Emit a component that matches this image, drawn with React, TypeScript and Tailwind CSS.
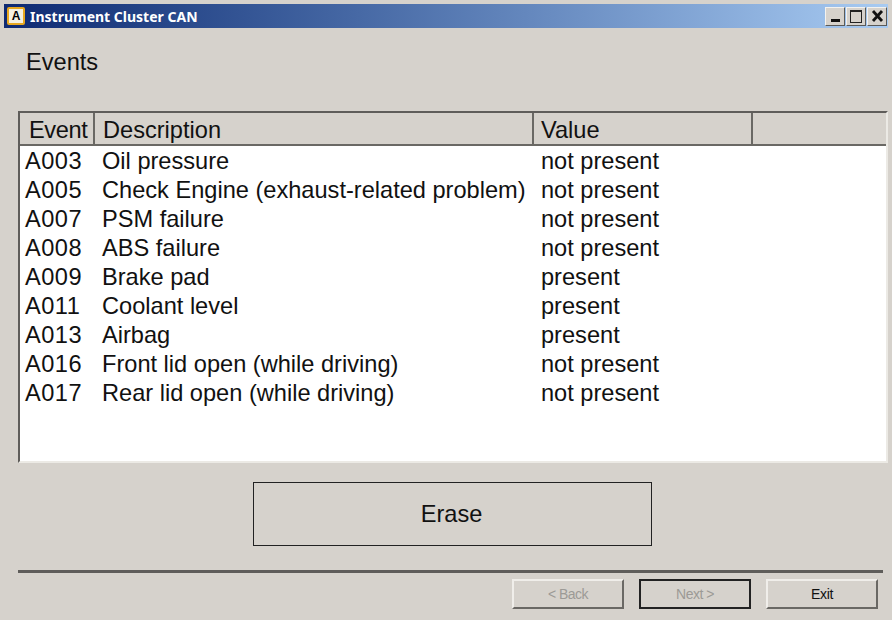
import * as React from 'react';

const ROWS = [
  ['A003', 'Oil pressure', 'not present'],
  ['A005', 'Check Engine (exhaust-related problem)', 'not present'],
  ['A007', 'PSM failure', 'not present'],
  ['A008', 'ABS failure', 'not present'],
  ['A009', 'Brake pad', 'present'],
  ['A011', 'Coolant level', 'present'],
  ['A013', 'Airbag', 'present'],
  ['A016', 'Front lid open (while driving)', 'not present'],
  ['A017', 'Rear lid open (while driving)', 'not present'],
];

const WinButton = ({ children }: { children: React.ReactNode }): React.JSX.Element => (
  <div className="flex h-[19px] w-[20px] items-center justify-center border border-t-[#f4f2ee] border-l-[#f4f2ee] border-r-[#5a5a58] border-b-[#5a5a58] bg-[#d6d2cc]">
    {children}
  </div>
);

const HeaderCell = ({ label, className }: { label: string; className: string }): React.JSX.Element => (
  <div className={`flex h-full items-center border-r-2 border-[#6a6864] pt-[4px] text-[23.6px] text-[#111] ${className}`}>{label}</div>
);

export default function App(): React.JSX.Element {
  return (
    <div className="flex h-[620px] w-[892px] flex-col bg-[#d6d2cc] pt-[4px] pl-[4px] font-['Liberation_Sans',sans-serif]">
      <div className="flex h-[24px] w-[884px] items-center bg-gradient-to-r from-[#0f2a72] to-[#a8cbf2] pr-[1px] pl-[3px]">
        <div className="flex h-[18px] w-[18px] items-center justify-center rounded-[2px] border-2 border-[#e8a820] bg-[#f6f1e2] text-[12px] leading-none font-bold text-black">
          A
        </div>
        <span className="ml-[5px] font-['Noto_Sans',sans-serif] text-[14px] font-bold text-white">Instrument Cluster CAN</span>
        <div className="ml-auto flex gap-px">
          <WinButton>
            <div className="mt-[9px] h-[3px] w-[9px] bg-[#111]" />
          </WinButton>
          <WinButton>
            <div className="h-[13px] w-[12px] border border-t-2 border-[#222]" />
          </WinButton>
          <WinButton>
            <svg width="13" height="12" viewBox="0 0 13 12">
              <path d="M2 1 L11 11 M11 1 L2 11" stroke="#111" strokeWidth="2.8" />
            </svg>
          </WinButton>
        </div>
      </div>

      <div className="ml-[22px] mt-[21px] text-[23.6px] leading-[26px] text-[#111]">Events</div>

      <div className="mt-[36px] ml-[14px] flex h-[352px] w-[870px] flex-col border-2 border-t-2 border-t-[#5f5d5a] border-l-[#5f5d5a] border-r-[#eceae5] border-b-[#eceae5] bg-white">
        <div className="flex h-[33px] shrink-0 items-center border-b-2 border-[#6a6864] bg-[#d6d2cc]">
          <HeaderCell label="Event" className="w-[75px] pl-[9px] tracking-[-0.4px]" />
          <HeaderCell label="Description" className="w-[439px] pl-[8px]" />
          <HeaderCell label="Value" className="w-[219px] pl-[7px]" />
        </div>
        <div className="flex flex-col pt-[1px]">
          {ROWS.map(([code, description, value]) => (
            <div key={code} className="flex h-[29px] items-center text-[23.6px] text-[#111]">
              <span className="w-[82px] pl-[5px] tracking-[0.5px]">{code}</span>
              <span className="w-[439px]">{description}</span>
              <span>{value}</span>
            </div>
          ))}
        </div>
      </div>

      <button className="mt-[19px] ml-[249px] flex h-[64px] w-[399px] items-center justify-center border border-[#222] bg-[#d6d2cc] pt-[2px] pr-[2px] text-[23.6px] text-[#111]">
        Erase
      </button>

      <div className="mt-[24px] ml-[14px] h-[3px] w-[865px] bg-[#5f5d5a]" />

      <div className="mt-[6px] ml-[508px] flex">
        <button className="flex h-[30px] w-[112px] items-center justify-center border-2 border-t-[#f0eeea] border-l-[#f0eeea] border-r-[#6a6864] border-b-[#6a6864] text-[14px] tracking-[-0.5px] text-[#9c9a96]">
          {'< Back'}
        </button>
        <button className="ml-[15px] flex h-[30px] w-[112px] items-center justify-center border-2 border-[#222] border-t-[#222] text-[14px] tracking-[-0.5px] text-[#9c9a96]">
          {'Next >'}
        </button>
        <button className="ml-[15px] flex h-[30px] w-[112px] items-center justify-center border-2 border-t-[#f0eeea] border-l-[#f0eeea] border-r-[#6a6864] border-b-[#6a6864] text-[14px] tracking-[-0.3px] text-[#111]">
          Exit
        </button>
      </div>
    </div>
  );
}
